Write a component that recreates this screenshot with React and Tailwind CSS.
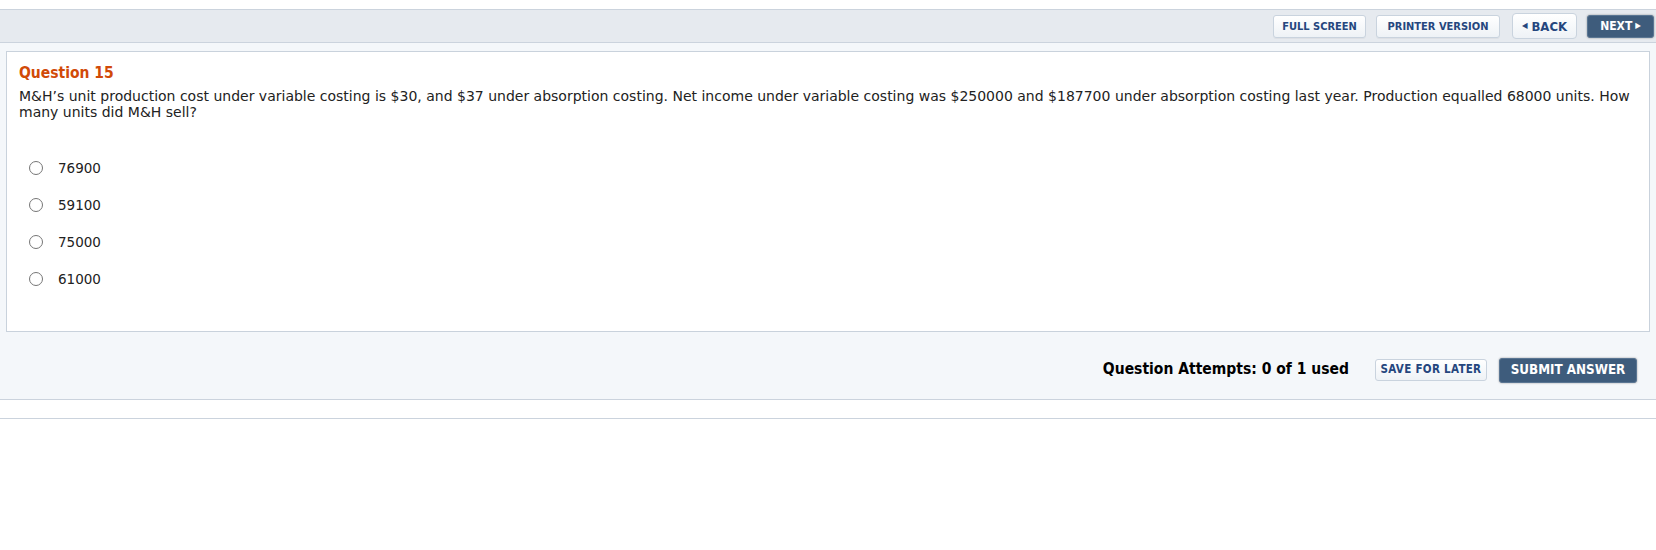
import React from 'react';

const options = ['76900', '59100', '75000', '61000'];

const lightBtn =
  "h-[23px] px-[8px] rounded-[3px] border border-[#c9d3de] bg-gradient-to-b from-white to-[#eef2f6] text-[#25467e] font-['DejaVu_Sans_Condensed','DejaVu_Sans',sans-serif] font-bold text-[11px] leading-none shadow-[0_1px_0_rgba(0,0,0,0.04)]";

const App = () => {
  return (
    <div className="w-[1656px] h-[550px] bg-white font-['DejaVu_Sans',Verdana,sans-serif] text-[#222]">
      <div className="h-[9px]" />

      {/* Top toolbar */}
      <div className="h-[34px] bg-[#e6eaef] border-y border-[#cbd3dd] flex items-center justify-end gap-[10px] pr-[2px]">
        <button className={`${lightBtn} w-[93px]`}>FULL SCREEN</button>
        <button className={`${lightBtn} w-[124px]`}>PRINTER VERSION</button>
        <button className="ml-[2px] h-[26px] w-[65px] rounded-[4px] border border-[#c9d3de] bg-gradient-to-b from-white to-[#eef2f6] text-[#25467e] font-['DejaVu_Sans_Condensed','DejaVu_Sans',sans-serif] font-bold text-[13px] leading-none flex items-center justify-center gap-[4px]">
          <span className="text-[8px]">◀</span>BACK
        </button>
        <button className="h-[23px] w-[67px] rounded-[3px] border border-[#5a7693] bg-[#3e5c7c] text-white font-['DejaVu_Sans_Condensed','DejaVu_Sans',sans-serif] font-bold text-[12px] leading-none flex items-center justify-center gap-[3px] shadow-[0_0_2px_rgba(0,0,0,0.4)]">
          NEXT<span className="text-[8px]">▶</span>
        </button>
      </div>

      {/* Question area */}
      <div className="bg-[#f4f7fa] px-[6px] pt-[8px] border-b border-[#cbd3dd]">
        <div className="bg-white border border-[#c9d2dc] px-[12px] pt-[11px] h-[281px]">
          <div className="text-[#d14a08] font-['DejaVu_Sans_Condensed','DejaVu_Sans',sans-serif] font-bold text-[15.5px] leading-[18px] mt-[1px]">
            Question 15
          </div>
          <p className="text-[14px] leading-[16px] mt-[6px]">
            M&amp;H’s unit production cost under variable costing is $30, and $37 under absorption costing. Net income under variable costing was $250000 and $187700 under absorption costing last year. Production equalled 68000 units. How many units did M&amp;H sell?
          </p>
          <div className="mt-[41px] flex flex-col gap-[23px] pl-[10px]">
            {options.map((o) => (
              <label key={o} className="flex items-center h-[14px] text-[13.5px]">
                <span className="w-[14px] h-[14px] rounded-full border border-[#767676] bg-white" />
                <span className="ml-[15px]">{o}</span>
              </label>
            ))}
          </div>
        </div>

        {/* Footer row */}
        <div className="h-[67px] flex items-center justify-end pr-[13px] pt-[9px]">
          <span className="font-['DejaVu_Sans_Condensed','DejaVu_Sans',sans-serif] font-bold text-[15.5px] text-black mr-[26px]">
            Question Attempts: 0 of 1 used
          </span>
          <button className="h-[22px] w-[112px] rounded-[3px] border border-[#c9d3de] bg-gradient-to-b from-white to-[#eef2f6] text-[#25467e] font-['DejaVu_Sans_Condensed','DejaVu_Sans',sans-serif] font-bold text-[11.5px] tracking-[0.3px] leading-none">
            SAVE FOR LATER
          </button>
          <button className="ml-[12px] h-[25px] w-[138px] rounded-[3px] border border-[#5a7693] bg-[#3e5c7c] text-white font-['DejaVu_Sans_Condensed','DejaVu_Sans',sans-serif] font-bold text-[13.3px] leading-none shadow-[0_0_2px_rgba(0,0,0,0.4)]">
            SUBMIT ANSWER
          </button>
        </div>
      </div>

      <div className="h-[18px]" />
      <div className="border-t border-[#cbd3dd]" />
    </div>
  );
};

export default App;
